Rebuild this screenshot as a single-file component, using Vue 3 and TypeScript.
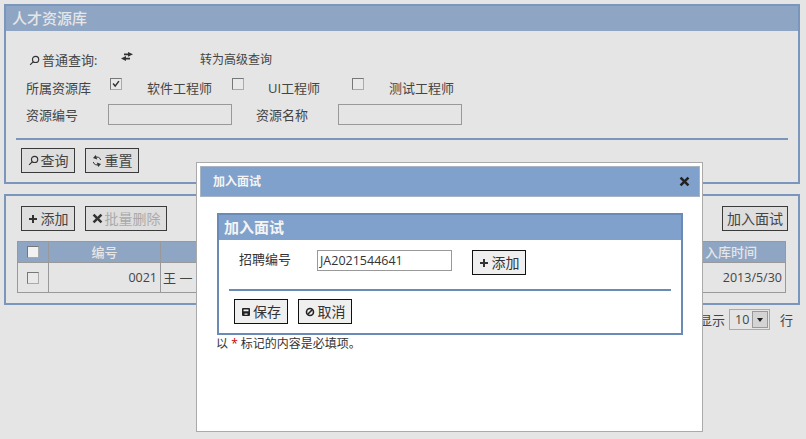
<script setup lang="ts">
const columns = [
  { title: '编号', cls: 'c-id' },
  { title: '姓名', cls: 'c-name' },
  { title: '', cls: 'c-fill' },
  { title: '入库时间', cls: 'c-date' },
]
</script>

<template>
  <div class="page">
    <section class="panel">
      <h2 class="panel-head">人才资源库</h2>
      <div class="panel-body">
        <div class="row row-mode">
          <svg class="ico search-ico" viewBox="0 0 12 12"><circle cx="7.2" cy="4.8" r="3.4" /><path d="M4.8 7.2 1.2 10.8" /></svg>
          <span class="mode-label">普通查询:</span>
          <svg class="swap-ico" viewBox="0 0 12 9"><path d="M7 0 12 2.200 7 4.800V3.300H3V1.500H7z" /><path d="M5 4 0 6.500 5 9V7.500H9V5.700H5z" /></svg>
          <span class="mode-link">转为高级查询</span>
        </div>
        <div class="row row-check">
          <span class="lib-label">所属资源库</span>
          <span class="box box-a checked">
            <svg viewBox="0 0 12 12"><path d="M2.500 5.500 5 8.500 9.500 2.500" /></svg>
          </span>
          <span class="opt opt-a">软件工程师</span>
          <span class="box box-b"></span>
          <span class="opt opt-b">UI工程师</span>
          <span class="box box-c"></span>
          <span class="opt opt-c">测试工程师</span>
        </div>
        <div class="row row-fields">
          <span class="field-label">资源编号</span>
          <span class="field"></span>
          <span class="field-label second">资源名称</span>
          <span class="field"></span>
        </div>
        <hr class="rule" />
        <div class="actions">
          <button class="btn w54" type="button">
            <svg class="ico search-ico" viewBox="0 0 12 12"><circle cx="7.2" cy="4.8" r="3.4" /><path d="M4.8 7.2 1.2 10.8" /></svg>查询
          </button>
          <button class="btn w54" type="button">
            <svg class="ico refresh-ico" viewBox="0 0 10 12"><path d="M8.700 5A3.800 3.800 0 0 0 3 2.600M1.300 7A3.800 3.800 0 0 0 7 9.400" /><path class="solid" d="M3.800 0 5.200 4.400 1 3zM6.200 12 4.800 7.600 9 9z" /></svg>重置
          </button>
        </div>
      </div>
    </section>

    <section class="panel list-panel">
      <div class="panel-body list-body">
        <div class="toolbar">
          <button class="btn w54" type="button">
            <svg class="plus-ico" viewBox="0 0 10 10"><path d="M4 1h2v3h3v2H6v3H4V6H1V4h3z" /></svg>添加
          </button>
          <button class="btn w82 muted" type="button">
            <svg class="x-ico" viewBox="0 0 10 10"><path d="M2.200 .6 5 3.400 7.800 .6 9.400 2.200 6.600 5 9.400 7.800 7.800 9.400 5 6.600 2.200 9.400 .6 7.800 3.400 5 .6 2.200z" /></svg>批量删除
          </button>
          <button class="btn w66 push" type="button">加入面试</button>
        </div>
        <table class="grid">
          <thead>
            <tr>
              <th class="c-check"><span class="box box-head"></span></th>
              <th v-for="col in columns" :key="col.cls" :class="col.cls">{{ col.title }}</th>
            </tr>
          </thead>
          <tbody>
            <tr>
              <td class="c-check"><span class="box box-row"></span></td>
              <td class="num">0021</td>
              <td>王 一</td>
              <td></td>
              <td class="num">2013/5/30</td>
            </tr>
          </tbody>
        </table>
      </div>
    </section>

    <div class="pager">
      <span>显示</span>
      <span class="select">
        <span class="select-value">10</span>
        <span class="select-arrow"><i></i></span>
      </span>
      <span class="pager-unit">行</span>
    </div>

    <div class="dialog">
      <header class="dialog-head">
        <span>加入面试</span>
        <svg class="close-ico" viewBox="0 0 10 10"><path d="M2.200 .6 5 3.400 7.800 .6 9.400 2.200 6.600 5 9.400 7.800 7.800 9.400 5 6.600 2.200 9.400 .6 7.800 3.400 5 .6 2.200z" /></svg>
      </header>
      <div class="dialog-body">
        <div class="inner">
          <h3 class="inner-head">加入面试</h3>
          <div class="inner-body">
            <div class="inner-row">
              <span class="inner-label">招聘编号</span>
              <span class="inner-input">JA2021544641</span>
              <button class="btn w54 strong" type="button">
                <svg class="plus-ico" viewBox="0 0 10 10"><path d="M4 1h2v3h3v2H6v3H4V6H1V4h3z" /></svg>添加
              </button>
            </div>
            <hr class="rule inner-rule" />
            <div class="inner-actions">
              <button class="btn w54 strong" type="button">
                <svg class="save-ico" viewBox="0 0 10 10"><path d="M1 2Q1 1 2 1H8Q9 1 9 2V8Q9 9 8 9H2Q1 9 1 8zM2.500 2.500V4.200H7.500V2.500zM3.500 6.500V7.800H6.500V6.500z" /></svg>保存
              </button>
              <button class="btn w54 strong" type="button">
                <svg class="ban-ico" viewBox="0 0 10 10"><circle cx="5" cy="5" r="3.500" /><path d="M2.800 7.200 7.200 2.800" /></svg>取消
              </button>
            </div>
          </div>
        </div>
        <p class="note">以 <em>*</em> 标记的内容是必填项。</p>
      </div>
    </div>
  </div>
</template>

<style scoped>
.page {
  position: relative;
  box-sizing: border-box;
  width: 806px;
  height: 439px;
  padding: 4px 6px 0 4px;
  overflow: hidden;
  background: #e5e5e5;
  color: #444;
  font: 13px/20px "Open Sans", "Noto Sans CJK SC", sans-serif;
}
.panel {
  border: 2px solid #7a96bc;
  background: #e5e5e5;
}
.panel-head {
  height: 25px;
  margin: 0;
  padding-left: 6px;
  background: #8ea5c3;
  color: #e6e6e6;
  font-size: 15px;
  font-weight: 500;
  line-height: 25px;
}
.panel-body {
  padding: 19px 10px 9px;
}
.row {
  display: flex;
  align-items: center;
  height: 20px;
  padding-left: 10px;
}
.row-mode {
  padding-left: 13px;
}
.ico {
  fill: none;
  stroke: #333;
  stroke-width: 1.300;
}
.search-ico {
  flex: none;
  width: 11px;
  height: 11px;
  margin-right: 2px;
}
.mode-label {
  width: 79px;
}
.swap-ico {
  width: 12px;
  height: 9px;
  margin-top: -8px;
  fill: #333;
}
.mode-link {
  margin-left: 67px;
  font-size: 12px;
}
.row-check {
  margin-top: 8px;
}
.lib-label {
  width: 84px;
}
.box {
  display: inline-block;
  box-sizing: border-box;
  width: 12px;
  height: 12px;
  border: 1px solid #aaa;
  border-top-color: #777;
  border-left-color: #777;
  background: #e9e9e9;
}
.box svg {
  display: block;
  width: 10px;
  height: 10px;
  fill: none;
  stroke: #333;
  stroke-width: 1.800;
}
.box-a,
.box-b,
.box-c {
  margin-top: -8px;
}
.opt-a {
  margin-left: 25px;
  width: 85px;
}
.opt-b {
  margin-left: 24px;
  width: 84px;
}
.opt-c {
  margin-left: 25px;
}
.row-fields {
  height: 21px;
  margin-top: 6px;
}
.field-label {
  width: 82px;
}
.field-label.second {
  width: 82px;
  margin-left: 24px;
}
.field {
  box-sizing: border-box;
  width: 124px;
  height: 21px;
  border: 1px solid #999;
  background: #e5e5e5;
}
.rule {
  height: 2px;
  margin: 13px 0 8px;
  border: 0;
  background: #7a96bc;
}
.actions {
  display: flex;
  gap: 10px;
  padding-left: 5px;
}
.btn {
  display: inline-flex;
  align-items: center;
  justify-content: center;
  box-sizing: border-box;
  height: 25px;
  padding: 0;
  border: 1px solid #3a3a3a;
  background: #dedede;
  color: #444;
  font: inherit;
  font-size: 14px;
}
.btn.strong {
  border-color: #111;
  background: #efefef;
  color: #333;
}
.w54 {
  width: 54px;
}
.w66 {
  width: 66px;
}
.w82 {
  width: 82px;
}
.refresh-ico {
  flex: none;
  width: 10px;
  height: 12px;
  margin-right: 3px;
  stroke-width: 1;
}
.solid {
  fill: #333;
  stroke: none;
}
.plus-ico {
  flex: none;
  width: 10px;
  height: 10px;
  margin-right: 3px;
  fill: #333;
}
.x-ico {
  flex: none;
  width: 11px;
  height: 11px;
  margin-right: 2px;
  fill: #333;
}
.muted {
  color: #aaa;
}
.list-panel {
  margin-top: 10px;
}
.list-body {
  padding: 10px 12px 10px 11px;
}
.toolbar {
  display: flex;
  gap: 10px;
  margin: 0 -2px 10px 4px;
}
.push {
  margin-left: auto;
}
.grid {
  width: 769px;
  table-layout: fixed;
  border-collapse: collapse;
  border: 1px solid #999;
}
.grid th {
  height: 20px;
  padding: 0;
  border: 1px solid #999;
  background: #8ea5c3;
  color: #e6e6e6;
  font-weight: 500;
  line-height: 20px;
}
.grid td {
  height: 29px;
  padding: 0 2px;
  border: 1px solid #999;
}
.c-check {
  width: 30px;
  padding: 0 !important;
  text-align: center;
}
.c-id {
  width: 111px;
}
.c-name {
  width: 98px;
}
.c-date {
  width: 108px;
}
.grid td.num {
  padding-right: 3px;
  font-size: 12.500px;
  text-align: right;
}
.box-head {
  background: #f2f2f2;
  vertical-align: -1px;
}
.box-row {
  vertical-align: -1px;
}
.pager {
  display: flex;
  align-items: center;
  justify-content: flex-end;
  margin-top: 4px;
  padding-right: 7px;
  height: 21px;
}
.select {
  display: flex;
  align-items: center;
  box-sizing: border-box;
  width: 41px;
  height: 21px;
  margin-left: 4px;
  border: 1px solid #aaa;
}
.select-value {
  width: 22px;
  padding-left: 5px;
  box-sizing: border-box;
  font-size: 12.500px;
}
.select-arrow {
  display: flex;
  align-items: center;
  justify-content: center;
  box-sizing: border-box;
  width: 16px;
  height: 17px;
  border: 1px solid #999;
  background: #d4d4d4;
}
.select-arrow i {
  border: 3.500px solid transparent;
  border-top: 4px solid #222;
  border-bottom: 0;
}
.pager-unit {
  margin-left: 10px;
}
.dialog {
  position: absolute;
  top: 162px;
  left: 196px;
  box-sizing: border-box;
  width: 507px;
  height: 270px;
  padding: 3px 2px 0 3px;
  border: 1px solid #aaa;
  background: #fff;
  color: #333;
}
.dialog-head {
  display: flex;
  align-items: center;
  justify-content: space-between;
  box-sizing: border-box;
  height: 31px;
  padding: 0 9px 0 12px;
  border: 1px solid #a9b4c2;
  background: #7fa1cb;
  color: #f4f4f4;
  font-size: 12px;
  font-weight: 700;
}
.close-ico {
  width: 11px;
  height: 11px;
  fill: #222;
}
.dialog-body {
  padding: 16px 0 0 17px;
}
.inner {
  box-sizing: border-box;
  width: 466px;
  height: 122px;
  border: 2px solid #6a8bb5;
}
.inner-head {
  height: 25px;
  margin: 0;
  padding-left: 5px;
  background: #7fa1cb;
  color: #f4f4f4;
  font-size: 15px;
  font-weight: 700;
  line-height: 25px;
}
.inner-body {
  padding: 10px 10px 0;
}
.inner-row {
  display: flex;
  align-items: flex-start;
  height: 25px;
}
.inner-label {
  width: 78px;
  padding-left: 10px;
  line-height: 19px;
}
.inner-input {
  box-sizing: border-box;
  width: 135px;
  height: 21px;
  margin-right: 20px;
  padding-left: 2px;
  border: 1px solid #999;
  font-size: 12.500px;
  line-height: 19px;
}
.inner-rule {
  margin: 14px 0 8px;
  background: #6a8bb5;
}
.inner-actions {
  display: flex;
  gap: 10px;
  padding-left: 5px;
}
.save-ico {
  width: 10px;
  height: 10px;
  margin-right: 2px;
  fill: #222;
  fill-rule: evenodd;
}
.ban-ico {
  width: 10px;
  height: 10px;
  margin-right: 3px;
  fill: none;
  stroke: #222;
  stroke-width: 1.600;
}
.note {
  margin: 1px 0 0 -1px;
  color: #333;
  font-size: 12px;
  line-height: 16px;
}
.note em {
  color: #c00;
  font-style: normal;
}
</style>

<style>
body {
  background: #e5e5e5;
}
</style>
